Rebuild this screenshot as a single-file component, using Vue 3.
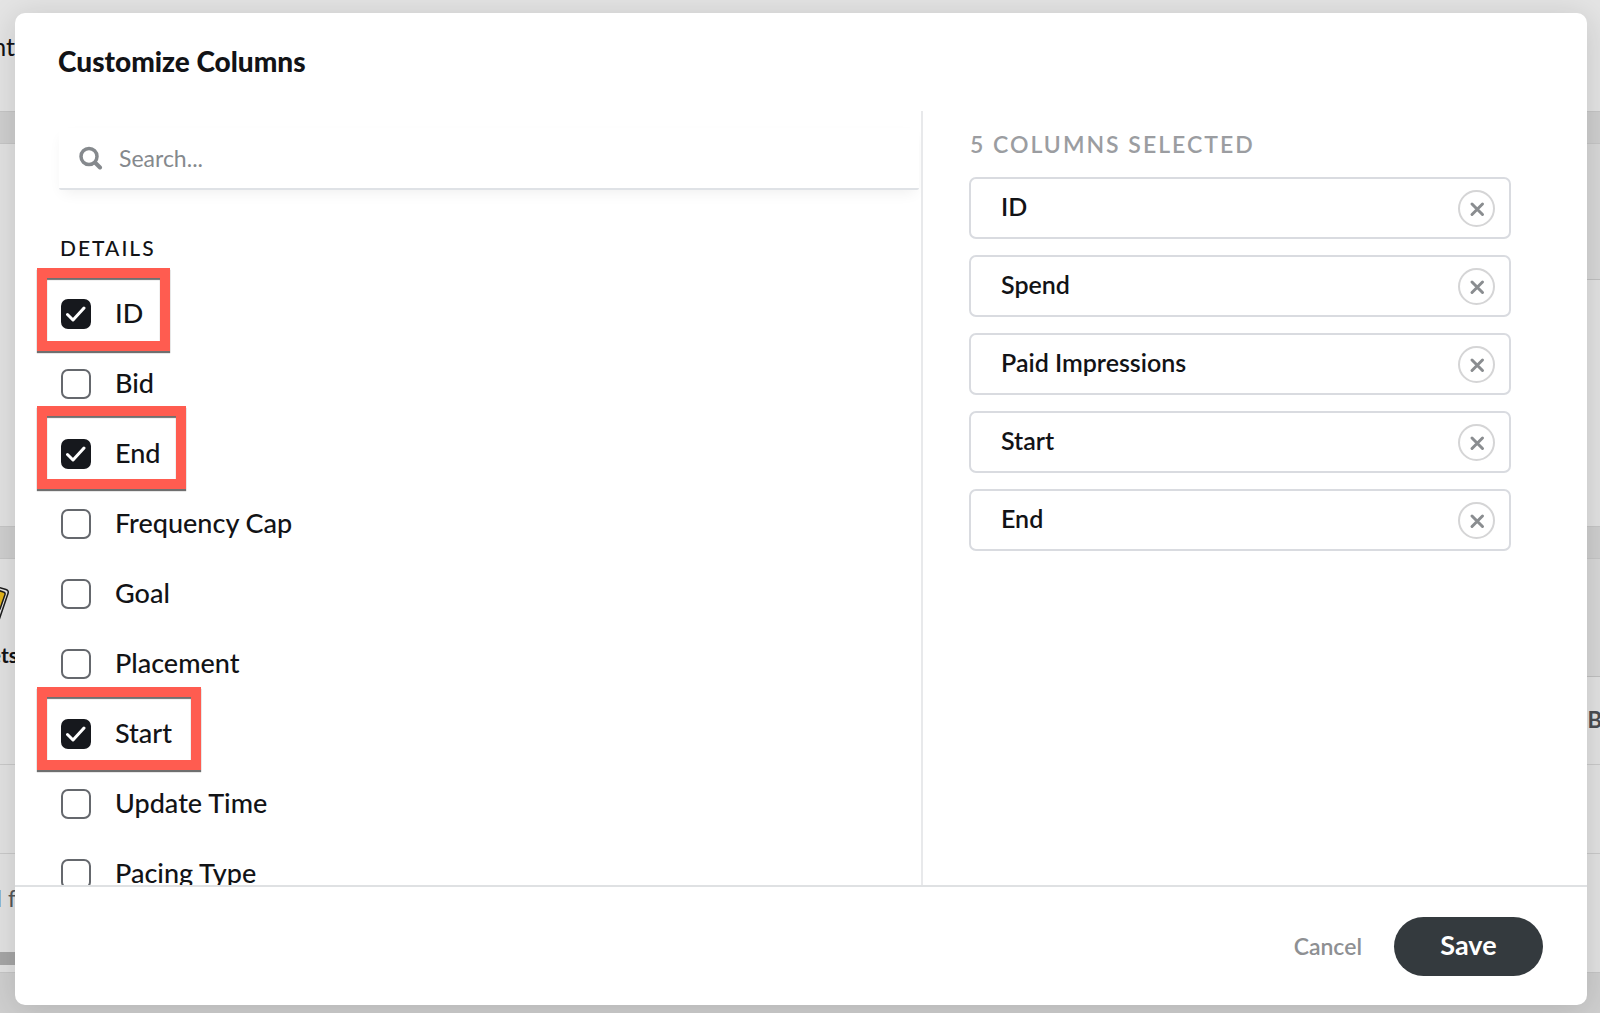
<script setup>
import { ref, computed } from 'vue'

const columns = ref([
  { name: 'ID', checked: true },
  { name: 'Bid', checked: false },
  { name: 'End', checked: true },
  { name: 'Frequency Cap', checked: false },
  { name: 'Goal', checked: false },
  { name: 'Placement', checked: false },
  { name: 'Start', checked: true },
  { name: 'Update Time', checked: false },
  { name: 'Pacing Type', checked: false },
])

// Highlight frames drawn over the list
const highlights = [
  { name: 'ID', top: 4, width: 133 },
  { name: 'End', top: 142, width: 149 },
  { name: 'Start', top: 423, width: 164 },
]

const selected = ref(['ID', 'Spend', 'Paid Impressions', 'Start', 'End'])
const count = computed(() => selected.value.length)
const query = ref('')

function toggle(column) {
  if (column.checked) {
    if (!selected.value.includes(column.name)) selected.value.push(column.name)
  } else {
    selected.value = selected.value.filter((n) => n !== column.name)
  }
}

function remove(name) {
  selected.value = selected.value.filter((n) => n !== name)
  const column = columns.value.find((c) => c.name === name)
  if (column) column.checked = false
}
</script>

<template>
  <div class="screen">
    <div class="page" aria-hidden="true">
      <div class="page-bar"><span class="clip">nt</span></div>
      <div class="panel panel-chart">
        <div class="panel-left"></div>
        <div class="panel-right"><div class="shade tall"></div></div>
      </div>
      <div class="panel panel-table">
        <div class="panel-left tab">
          <svg class="ticket" width="15" height="48" viewBox="0 0 15 48">
            <path d="M-6 -1 L6 2.500 Q9 3.500 8 6.500 L-1 33 L-6 32Z" fill="#e6e6e6" stroke="#1c1c1c" stroke-width="1.500" />
            <path d="M-6 2 L3.500 5 Q5.500 5.500 5 7.500 L0 22 L-6 26Z" fill="#e3b51c" stroke="#1c1c1c" stroke-width="1.500" />
          </svg>
          <span class="clip tab-name">ets</span>
        </div>
        <div class="panel-right"><div class="shade"></div></div>
        <div class="row"><span class="head-cell">B</span></div>
        <div class="row mid"></div>
        <div class="row last"><span class="clip muted">l f</span></div>
        <div class="scrollbar"></div>
      </div>
    </div>

    <div class="overlay">
      <section class="modal" role="dialog" aria-labelledby="modal-title">
        <h1 id="modal-title">Customize Columns</h1>

        <div class="content">
          <div class="available">
            <label class="search">
              <svg width="24" height="24" viewBox="0 0 24 24" fill="none" stroke="#85898d" aria-hidden="true">
                <circle cx="10" cy="10.500" r="8" stroke-width="3.500" />
                <path d="M16.500 17l4.500 4.500" stroke-width="4" stroke-linecap="round" />
              </svg>
              <input v-model="query" type="text" placeholder="Search..." aria-label="Search" />
            </label>

            <h2>DETAILS</h2>
            <div class="list">
              <label v-for="c in columns" :key="c.name" class="option">
                <input v-model="c.checked" type="checkbox" @change="toggle(c)" />
                <svg class="tick" width="20" height="16" viewBox="0 0 20 16" fill="none" stroke="#fff" stroke-width="3" stroke-linecap="round" stroke-linejoin="round" aria-hidden="true">
                  <path d="M1.500 8.500l5.500 5.500L18 2" />
                </svg>
                <span>{{ c.name }}</span>
              </label>
              <div
                v-for="h in highlights"
                :key="h.name"
                class="highlight"
                :style="{ top: h.top + 'px', width: h.width + 'px' }"
              ></div>
            </div>
          </div>

          <div class="chosen">
            <h2>{{ count }} COLUMNS SELECTED</h2>
            <ul>
              <li v-for="name in selected" :key="name">
                <span>{{ name }}</span>
                <button type="button" class="remove" :aria-label="'Remove ' + name" @click="remove(name)">
                  <svg width="17" height="17" viewBox="0 0 17 17" stroke="#8a8d90" stroke-width="3" stroke-linecap="round" aria-hidden="true">
                    <path d="M4 4l10.500 10.500M14.500 4L4 14.500" />
                  </svg>
                </button>
              </li>
            </ul>
          </div>
        </div>

        <footer>
          <button type="button" class="cancel">Cancel</button>
          <button type="button" class="save">Save</button>
        </footer>
      </section>
    </div>
  </div>
</template>

<style>
html,
body,
#app {
  height: 100%;
}
body {
  overflow: hidden;
}
</style>

<style scoped>
* {
  box-sizing: border-box;
}
.screen {
  position: relative;
  height: 100%;
  overflow: hidden;
  font-family: Lato, 'Open Sans', sans-serif;
  color: #121316;
}
h1,
h2,
ul {
  margin: 0;
  padding: 0;
}

/* Dimmed page behind the dialog */
.page {
  min-height: 100%;
  background: #cfcfcf;
}
.page-bar {
  height: 112px;
  padding-top: 30px;
  background: #e4e4e4;
  border-bottom: 1px solid #c6c6c6;
  font-size: 25px;
  line-height: 32px;
}
.clip {
  display: flex;
  justify-content: flex-end;
  width: 15px;
  white-space: pre;
}
.panel {
  display: grid;
  grid-template-columns: 1fr 1fr;
  margin-top: 31px;
  background: #e2e2e2;
  border: solid #c6c6c6;
  border-width: 1px 0;
}
.panel-chart {
  height: 384px;
}
.shade {
  height: 118px;
  background: #d8d8d8;
  border-bottom: 1px solid #c0c0c0;
}
.shade.tall {
  height: 136px;
}
.tab {
  padding-top: 28px;
}
.ticket {
  display: block;
}
.tab-name {
  padding-top: 6px;
  font-size: 21px;
  line-height: 28px;
  font-weight: 700;
  width: 18px;
}
.row {
  grid-column: 1 / -1;
  display: flex;
  align-items: center;
  height: 88px;
  border-bottom: 1px solid #cacaca;
}
.row.mid {
  height: 89px;
}
.row.last {
  height: 98px;
  padding-bottom: 10px;
  border: 0;
}
.head-cell {
  margin-left: auto;
  margin-right: -2px;
  padding-bottom: 2px;
  font-size: 22px;
  font-weight: 700;
  color: #4b4e52;
}
.muted {
  width: 16px;
  font-size: 23px;
  color: #55575a;
}
.scrollbar {
  grid-column: 1 / -1;
  height: 13px;
  margin-bottom: 7px;
  background: linear-gradient(90deg, #a6a6a6 50%, transparent 50%);
}

/* Dialog */
.overlay {
  position: absolute;
  inset: 0;
  display: flex;
  padding: 13px 13px 8px 15px;
}
.modal {
  flex: 1;
  display: flex;
  flex-direction: column;
  min-width: 0;
  background: #fff;
  border-radius: 10px;
  box-shadow: 0 4px 32px rgba(0, 0, 0, 0.14);
}
h1 {
  padding: 29px 43px 31px;
  font-size: 28px;
  line-height: 38px;
  font-weight: 900;
}
.content {
  flex: 1;
  display: grid;
  grid-template-columns: 908fr 664fr;
  grid-template-rows: minmax(0, 1fr);
  min-height: 0;
}
.available {
  overflow: hidden;
  border-right: 2px solid #e8e9eb;
}
.search {
  display: flex;
  align-items: center;
  gap: 16px;
  height: 62px;
  margin: 17px 2px 0 44px;
  padding: 0 20px;
  border-bottom: 2px solid #dfe2e6;
  border-radius: 2px;
  box-shadow: 0 6px 14px -4px rgba(0, 0, 0, 0.07);
}
.search input {
  flex: 1;
  min-width: 0;
  padding: 0;
  border: 0;
  outline: 0;
  background: none;
  font: inherit;
  font-size: 23px;
}
.search input::placeholder {
  color: #85898d;
  opacity: 1;
}
.available h2 {
  padding: 42px 0 0 45px;
  font-size: 21px;
  line-height: 32px;
  font-weight: 500;
  letter-spacing: 2px;
}
.list {
  position: relative;
  padding-top: 15px;
}
.option {
  position: relative;
  display: flex;
  align-items: center;
  gap: 24px;
  height: 70px;
  padding-left: 46px;
  font-size: 27px;
  font-weight: 500;
}
.option span {
  padding-bottom: 4px;
}
.option input {
  appearance: none;
  width: 30px;
  height: 30px;
  margin: 0;
  border: 2px solid #65686d;
  border-radius: 7px;
  background: #fff;
}
.option input:checked {
  border-color: #16181d;
  background: #16181d;
}
.tick {
  position: absolute;
  left: 51px;
  top: 27px;
}
.option input:not(:checked) + .tick {
  display: none;
}
.highlight {
  position: absolute;
  left: 22px;
  height: 83px;
  border: 10px solid #ff5c50;
  box-shadow: 0 2px 1px #6f6f6f, inset 0 2px 1px #6f6f6f;
  pointer-events: none;
}
.chosen {
  padding: 16px 76px 0 46px;
}
.chosen h2 {
  padding-left: 1px;
  font-size: 23px;
  line-height: 34px;
  font-weight: 600;
  letter-spacing: 2px;
  color: #9b9da1;
}
.chosen ul {
  display: flex;
  flex-direction: column;
  gap: 16px;
  margin-top: 16px;
  list-style: none;
}
.chosen li {
  display: flex;
  align-items: center;
  justify-content: space-between;
  height: 62px;
  padding: 0 14px 0 30px;
  border: 2px solid #d9dbe0;
  border-radius: 7px;
  font-size: 25px;
  font-weight: 600;
}
.chosen li span {
  padding-bottom: 4px;
}
.remove {
  display: grid;
  place-items: center;
  width: 37px;
  height: 37px;
  padding: 0;
  border: 2px solid #d5d5d6;
  border-radius: 50%;
  background: #fff;
}
footer {
  display: flex;
  align-items: center;
  justify-content: flex-end;
  gap: 32px;
  height: 120px;
  padding-right: 44px;
  border-top: 2px solid #dfe1e3;
}
footer button {
  padding: 0;
  border: 0;
  background: none;
  font-family: inherit;
}
.cancel {
  font-size: 23px;
  font-weight: 600;
  color: #8e9093;
}
footer .save {
  width: 149px;
  height: 59px;
  padding-bottom: 4px;
  border-radius: 30px;
  background: #343a3e;
  color: #fff;
  font-size: 27px;
  font-weight: 700;
}
</style>
